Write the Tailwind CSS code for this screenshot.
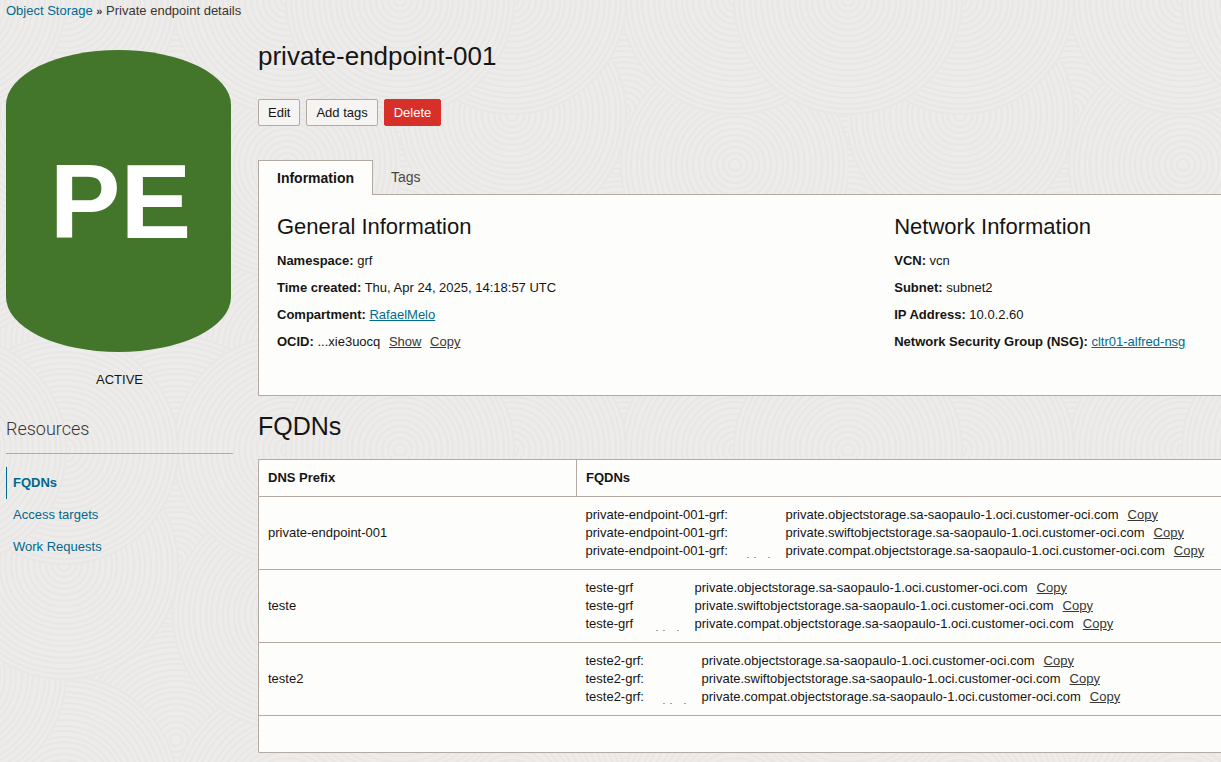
<!DOCTYPE html>
<html lang="en">

<head>
  <meta charset="UTF-8">
  <meta name="viewport" content="width=device-width, initial-scale=1.0">
  <title>Private endpoint details</title>
  <script src="https://cdn.jsdelivr.net/npm/@tailwindcss/browser@4"></script>
</head>

<body class="relative isolate min-h-screen overflow-x-hidden bg-[#edebe9] font-['Liberation_Sans',Arial,sans-serif] text-[13px] leading-[18px] text-[#161513]">

  <!-- Swirl background -->
  <svg class="absolute inset-0 -z-10 h-full w-full" aria-hidden="true">
    <defs>
      <g id="swirl" fill="none" stroke="#e9e7e5" stroke-width="2">
        <circle r="114" fill="#edecea" />
        <circle r="109" />
        <circle r="104" />
        <circle r="98" />
        <circle r="93" />
        <circle r="87" />
        <circle r="81" />
        <circle r="76" />
        <circle r="70" />
        <circle r="64" />
        <circle r="59" />
        <circle r="53" />
        <circle r="48" />
        <circle r="42" />
        <circle r="36" />
        <circle r="30" />
        <circle r="24" />
        <circle r="18" />
        <circle r="12" />
        <circle r="6" />
      </g>
      <pattern id="swirls" x="-48" y="0" width="448" height="450" patternUnits="userSpaceOnUse">
        <use href="#swirl" x="224" y="110" />
        <use href="#swirl" x="0" y="340" />
        <use href="#swirl" x="448" y="340" />
        <use href="#swirl" x="224" y="290" />
        <use href="#swirl" x="335" y="350" />
        <use href="#swirl" x="112" y="340" />
        <use href="#swirl" x="0" y="225" />
        <use href="#swirl" x="448" y="225" />
        <use href="#swirl" x="335" y="165" />
        <use href="#swirl" x="112" y="115" />
        <use href="#swirl" x="224" y="450" />
        <use href="#swirl" x="335" y="450" />
        <use href="#swirl" x="335" y="0" />
        <use href="#swirl" x="112" y="450" />
        <use href="#swirl" x="112" y="0" />
        <use href="#swirl" x="0" y="450" />
        <use href="#swirl" x="448" y="450" />
        <use href="#swirl" x="0" y="0" />
        <use href="#swirl" x="448" y="0" />
      </pattern>
    </defs>
    <rect width="100%" height="100%" fill="url(#swirls)" />
  </svg>

  <nav class="px-[6px] pt-[2px] text-[#3a3632]" aria-label="Breadcrumb">
    <a class="text-[#006b8f] hover:underline" href="#">Object Storage</a>
    <span class="text-[11px] font-bold">»</span>
    <span>Private endpoint details</span>
  </nav>

  <div class="flex gap-[25px] pl-[6px]">

    <aside class="w-[227px] shrink-0 pt-[30px]">
      <div class="flex h-[302px] w-[225px] items-center justify-center rounded-[50%/55px] bg-[#43752a] pl-1 text-[106px] leading-none font-bold text-white">PE</div>
      <p class="pt-[19px] text-center">ACTIVE</p>

      <h2 class="mt-[30px] border-b border-[#b3aaa4] pb-[14px] font-['Roboto',sans-serif] text-lg leading-5 font-light text-[#3a3632]">Resources</h2>
      <ul class="mt-[13px] text-[#00688c]">
        <li><a class="block border-l border-[#00688c] px-[6px] py-[7px] font-bold" href="#">FQDNs</a></li>
        <li><a class="block border-l border-transparent px-[6px] py-[7px]" href="#">Access targets</a></li>
        <li><a class="block border-l border-transparent px-[6px] py-[7px]" href="#">Work Requests</a></li>
      </ul>
    </aside>

    <main class="min-w-0 flex-1">
      <h1 class="pt-5 text-[26px] leading-8">private-endpoint-001</h1>

      <div class="mt-[27px] flex gap-[6px]">
        <button class="h-[27px] rounded-xs border border-[#b3aaa4] bg-[#f5f4f2] px-[9px]">Edit</button>
        <button class="h-[27px] rounded-xs border border-[#b3aaa4] bg-[#f5f4f2] px-[9px]">Add tags</button>
        <button class="h-[27px] rounded-xs border border-[#d63029] bg-[#d63029] px-[9px] text-white">Delete</button>
      </div>

      <div class="mt-[34px] flex text-sm" role="tablist">
        <button class="z-10 -mb-px h-[35px] border border-b-0 border-[#b3aaa4] bg-[#fdfdfb] px-[18px] font-bold" role="tab" aria-selected="true">Information</button>
        <button class="h-[34px] px-[18px] text-[#4a4641]" role="tab" aria-selected="false">Tags</button>
      </div>

      <section class="grid h-[202px] grid-cols-[17fr_9fr] border border-r-0 border-[#b3aaa4] bg-[#fdfdfb] pt-[18px] pl-[18px]">
        <div>
          <h2 class="text-[22px] leading-7">General Information</h2>
          <div class="mt-[11px] grid gap-[9px]">
            <p><b>Namespace:</b> grf</p>
            <p><b>Time created:</b> Thu, Apr 24, 2025, 14:18:57 UTC</p>
            <p><b>Compartment:</b> <a class="text-[#006b8f] underline" href="#">RafaelMelo</a></p>
            <p><b>OCID:</b> ...xie3uocq <a class="ml-[5px] text-[#3a3632] underline" href="#">Show</a> <a class="ml-[5px] text-[#3a3632] underline" href="#">Copy</a></p>
          </div>
        </div>
        <div>
          <h2 class="text-[22px] leading-7">Network Information</h2>
          <div class="mt-[11px] grid gap-[9px]">
            <p><b>VCN:</b> vcn</p>
            <p><b>Subnet:</b> subnet2</p>
            <p><b>IP Address:</b> 10.0.2.60</p>
            <p class="whitespace-nowrap"><b>Network Security Group (NSG):</b> <a class="text-[#006b8f] underline" href="#">cltr01-alfred-nsg</a></p>
          </div>
        </div>
      </section>

      <h2 class="mt-[14px] text-[25px] leading-8">FQDNs</h2>

      <div class="mt-[17px] rounded-l-xs border border-r-0 border-[#b3aaa4] bg-[#fdfdfb] pb-9">
        <table class="w-full table-fixed border-collapse text-left">
          <thead>
            <tr class="h-9 border-b border-[#b3aaa4]">
              <th class="w-[33%] border-r border-[#b3aaa4] px-[9px]">DNS Prefix</th>
              <th class="px-[9px]">FQDNs</th>
            </tr>
          </thead>
          <tbody class="whitespace-nowrap">
            <tr class="h-[73px] border-b border-[#b3aaa4]">
              <td class="px-[9px]">private-endpoint-001</td>
              <td class="px-[9px]">
                <div class="flex"><span class="w-[200px]">private-endpoint-001-grf:</span>private.objectstorage.sa-saopaulo-1.oci.customer-oci.com<a class="ml-[9px] text-[#3a3632] underline" href="#">Copy</a></div>
                <div class="flex"><span class="w-[200px]">private-endpoint-001-grf:</span>private.swiftobjectstorage.sa-saopaulo-1.oci.customer-oci.com<a class="ml-[9px] text-[#3a3632] underline" href="#">Copy</a></div>
                <div class="flex">
                  <span class="flex w-[200px] items-end justify-between">private-endpoint-001-grf:<svg class="mr-[14px] h-[3px] w-6" fill="#a5a29e" aria-hidden="true"><path d="M0 0h2v1H0zM7 0h2v1H7zM21 0h2v1h-2z" /></svg></span>private.compat.objectstorage.sa-saopaulo-1.oci.customer-oci.com<a class="ml-[9px] text-[#3a3632] underline" href="#">Copy</a>
                </div>
              </td>
            </tr>
            <tr class="h-[73px] border-b border-[#b3aaa4]">
              <td class="px-[9px]">teste</td>
              <td class="px-[9px]">
                <div class="flex"><span class="w-[109px]">teste-grf</span>private.objectstorage.sa-saopaulo-1.oci.customer-oci.com<a class="ml-[9px] text-[#3a3632] underline" href="#">Copy</a></div>
                <div class="flex"><span class="w-[109px]">teste-grf</span>private.swiftobjectstorage.sa-saopaulo-1.oci.customer-oci.com<a class="ml-[9px] text-[#3a3632] underline" href="#">Copy</a></div>
                <div class="flex">
                  <span class="flex w-[109px] items-end justify-between">teste-grf<svg class="mr-[14px] h-[3px] w-6" fill="#a5a29e" aria-hidden="true"><path d="M0 0h2v1H0zM7 0h2v1H7zM21 0h2v1h-2z" /></svg></span>private.compat.objectstorage.sa-saopaulo-1.oci.customer-oci.com<a class="ml-[9px] text-[#3a3632] underline" href="#">Copy</a>
                </div>
              </td>
            </tr>
            <tr class="h-[73px] border-b border-[#b3aaa4]">
              <td class="px-[9px]">teste2</td>
              <td class="px-[9px]">
                <div class="flex"><span class="w-[116px]">teste2-grf:</span>private.objectstorage.sa-saopaulo-1.oci.customer-oci.com<a class="ml-[9px] text-[#3a3632] underline" href="#">Copy</a></div>
                <div class="flex"><span class="w-[116px]">teste2-grf:</span>private.swiftobjectstorage.sa-saopaulo-1.oci.customer-oci.com<a class="ml-[9px] text-[#3a3632] underline" href="#">Copy</a></div>
                <div class="flex">
                  <span class="flex w-[116px] items-end justify-between">teste2-grf:<svg class="mr-[14px] h-[3px] w-6" fill="#a5a29e" aria-hidden="true"><path d="M0 0h2v1H0zM7 0h2v1H7zM21 0h2v1h-2z" /></svg></span>private.compat.objectstorage.sa-saopaulo-1.oci.customer-oci.com<a class="ml-[9px] text-[#3a3632] underline" href="#">Copy</a>
                </div>
              </td>
            </tr>
          </tbody>
        </table>
      </div>
    </main>
  </div>
</body>

</html>
